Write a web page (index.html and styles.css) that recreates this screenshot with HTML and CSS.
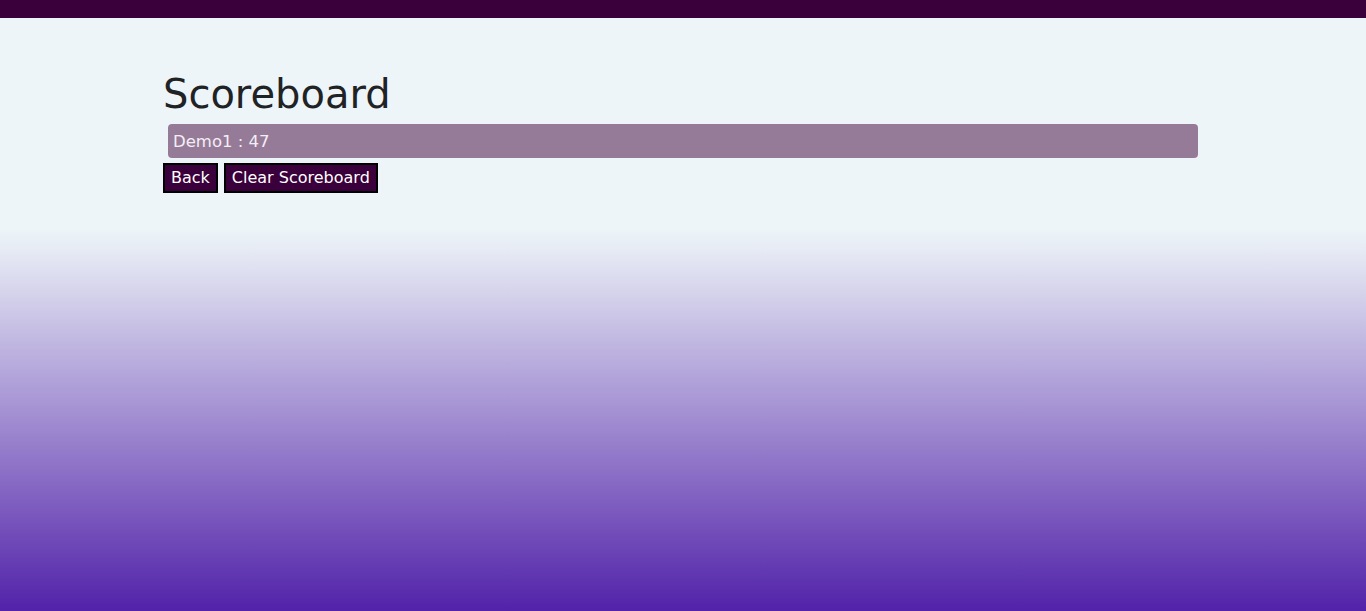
FILE: index.html
```html
<!DOCTYPE html>
<html>
<head>
<meta charset="utf-8">
<title>Scoreboard</title>
<link rel="stylesheet" href="styles.css">
</head>
<body>
<div class="topbar"></div>
<main class="container">
  <h1 class="title">Scoreboard</h1>
  <div class="score-row">Demo1 : 47</div>
  <div class="actions">
    <button class="btn">Back</button>
    <button class="btn">Clear Scoreboard</button>
  </div>
</main>
</body>
</html>
```
FILE: styles.css
```css
html, body {
  margin: 0;
  padding: 0;
  height: 100%;
}
body {
  font-family: "DejaVu Sans", Verdana, sans-serif;
  background: linear-gradient(to bottom, #edf5f8 0%, #edf5f8 37.5%, #e4e7f3 42%, #5222a9 100%);
  color: #222;
  min-height: 611px;
}
.topbar {
  height: 18px;
  background: #3a003c;
}
.container {
  width: 1040px;
  margin: 0 auto;
  padding-top: 52px;
}
.title {
  font-size: 40px;
  font-weight: normal;
  margin: 0 0 6px 0;
  line-height: 48px;
  color: #1f2326;
}
.score-row {
  margin: 0 5px;
  height: 34px;
  box-sizing: border-box;
  background: #967b99;
  border-radius: 4px;
  color: #f3eef4;
  font-size: 16.5px;
  line-height: 35px;
  padding-left: 5px;
}
.actions {
  display: flex;
  gap: 6px;
  margin-top: 5px;
}
.btn {
  font-family: "DejaVu Sans", Verdana, sans-serif;
  font-size: 16px;
  height: 30px;
  padding: 0 6px;
  background: #3a003c;
  color: #fff;
  border: 2px solid #000;
  border-radius: 0;
  line-height: 26px;
}
```
